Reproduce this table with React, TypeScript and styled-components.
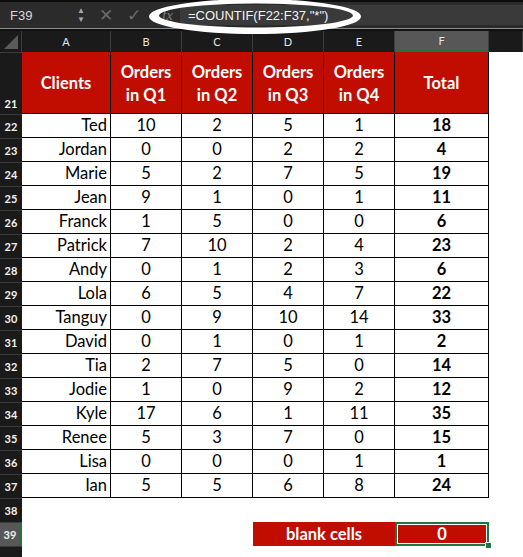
import React from "react";
import styled, { createGlobalStyle, css } from "styled-components";

const Global = createGlobalStyle`
  html, body { margin: 0; padding: 0; background: #ffffff; }
  body { width: 523px; height: 557px; overflow: hidden; font-family: Lato, "Open Sans", sans-serif; }
`;

const RED = "#c00d00";
const GREEN = "#217346";

const Page = styled.div`
  position: relative;
  width: 523px;
  height: 557px;
  overflow: hidden;
  display: flex;
  flex-direction: column;
  background: #fff;
`;

const FormulaBar = styled.div`
  height: 26px;
  border-top: 2px solid #0c0c0c;
  background: #2b2b2b;
  display: flex;
  align-items: center;
  font-family: "Liberation Sans", Arial, sans-serif;
`;

const BarDivider = styled.div`
  height: 2px;
  border-top: 1px solid #8c8c8c;
  background: #111;
`;

const NameBox = styled.div`
  width: 70px;
  padding-left: 10px;
  box-sizing: border-box;
  color: #d8d8d8;
  font-size: 13px;
`;

const Stepper = styled.div`
  width: 22px;
  display: flex;
  flex-direction: column;
  align-items: center;
  color: #a8a8a8;
  font-size: 8px;
  line-height: 9px;
`;

const BarIcon = styled.div<{ $w: number }>`
  width: ${(p) => p.$w}px;
  text-align: center;
  color: #6a6a6a;
  font-size: 17px;
`;

const Fx = styled.div`
  width: 32px;
  padding-left: 14px;
  box-sizing: border-box;
  color: #7a7a7a;
  font-family: "Liberation Serif", serif;
  font-style: italic;
  font-size: 15px;
`;

const FormulaField = styled.div`
  flex: 1;
  height: 20px;
  background: #3a3a3a;
  color: #f2f2f2;
  font-size: 13px;
  display: flex;
  align-items: center;
  padding-left: 8px;
`;

const Ring = styled.svg`
  position: absolute;
  left: 0;
  top: 0;
  pointer-events: none;
`;

const Sheet = styled.div`
  display: grid;
  grid-template-columns: 22px 89px 71px 71px 71px 71px 94px 1fr;
  grid-template-rows: 21px 62px repeat(18, 24px) 1fr;
  flex: 1;
`;

const ColHead = styled.div<{ $active?: boolean }>`
  background: ${(p) => (p.$active ? "#575757" : "#1a1a1a")};
  color: #e6e6e6;
  font-size: 11px;
  display: flex;
  align-items: center;
  justify-content: center;
  border-right: 1px solid #3c3c3c;
  box-sizing: border-box;
  ${(p) => p.$active && css`border-bottom: 2px solid ${GREEN};`}
`;

const Corner = styled.div`
  background: #1a1a1a;
  border-right: 1px solid #3c3c3c;
  position: relative;
  box-sizing: border-box;
`;

const CornerTri = styled.div`
  position: absolute;
  right: 3px;
  bottom: 3px;
  width: 0;
  height: 0;
  border-left: 14px solid transparent;
  border-bottom: 14px solid #5a5a5a;
`;

const RowHead = styled.div<{ $active?: boolean; $bottom?: boolean }>`
  background: ${(p) => (p.$active ? "#575757" : "#1a1a1a")};
  color: #f2f2f2;
  font-size: 11px;
  font-weight: 700;
  display: flex;
  justify-content: center;
  align-items: ${(p) => (p.$bottom ? "flex-end" : "center")};
  padding-bottom: ${(p) => (p.$bottom ? "4px" : "0")};
  border-top: 1px solid #3a3a3a;
  box-sizing: border-box;
  ${(p) => p.$active && css`border-right: 2px solid ${GREEN};`}
`;

type Kind = "head" | "data" | "blank" | "red";

const Cell = styled.div<{ $kind: Kind; $align?: "left" | "center" | "right"; $bold?: boolean }>`
  box-sizing: border-box;
  display: flex;
  align-items: center;
  justify-content: ${(p) => (p.$align === "right" ? "flex-end" : "center")};
  text-align: center;
  padding: ${(p) => (p.$align === "right" ? "0 3px 0 0" : "0")};
  font-size: 16.5px;
  line-height: 23px;
  font-weight: ${(p) => (p.$bold ? 700 : 400)};
  color: #000;
  background: #fff;
  ${(p) =>
    p.$kind === "head" &&
    css`
      background: ${RED};
      color: #fff;
      border-right: 1px solid #000;
      border-bottom: 1px solid #000;
      padding-top: 2px;
    `}
  ${(p) =>
    p.$kind === "data" &&
    css`
      border-right: 1px solid #000;
      border-bottom: 1px solid #000;
    `}
  ${(p) =>
    p.$kind === "red" &&
    css`
      background: ${RED};
      color: #fff;
    `}
`;

const Selected = styled(Cell)`
  position: relative;
  border: 2px solid ${GREEN};
  box-shadow: inset 0 0 0 1px #fff;
`;

const Handle = styled.div`
  position: absolute;
  right: -5px;
  bottom: -5px;
  width: 5px;
  height: 5px;
  background: ${GREEN};
  border: 1px solid #fff;
`;

const rows: [string, number, number, number, number, number][] = [
  ["Ted", 10, 2, 5, 1, 18],
  ["Jordan", 0, 0, 2, 2, 4],
  ["Marie", 5, 2, 7, 5, 19],
  ["Jean", 9, 1, 0, 1, 11],
  ["Franck", 1, 5, 0, 0, 6],
  ["Patrick", 7, 10, 2, 4, 23],
  ["Andy", 0, 1, 2, 3, 6],
  ["Lola", 6, 5, 4, 7, 22],
  ["Tanguy", 0, 9, 10, 14, 33],
  ["David", 0, 1, 0, 1, 2],
  ["Tia", 2, 7, 5, 0, 14],
  ["Jodie", 1, 0, 9, 2, 12],
  ["Kyle", 17, 6, 1, 11, 35],
  ["Renee", 5, 3, 7, 0, 15],
  ["Lisa", 0, 0, 0, 1, 1],
  ["Ian", 5, 5, 6, 8, 24],
];

const cols = ["A", "B", "C", "D", "E", "F"];

export default function App() {
  return (
    <Page>
      <Global />
      <FormulaBar>
        <NameBox>F39</NameBox>
        <Stepper>
          <span>▲</span>
          <span>▼</span>
        </Stepper>
        <BarIcon $w={28}>✕</BarIcon>
        <BarIcon $w={28}>✓</BarIcon>
        <Fx>fx</Fx>
        <FormulaField>=COUNTIF(F22:F37,"*")</FormulaField>
      </FormulaBar>
      <BarDivider />
      <Sheet>
        <Corner>
          <CornerTri />
        </Corner>
        {cols.map((c) => (
          <ColHead key={c} $active={c === "F"}>
            {c}
          </ColHead>
        ))}
        <ColHead />

        <RowHead $bottom>21</RowHead>
        <Cell $kind="head" $bold>Clients</Cell>
        {["Q1", "Q2", "Q3", "Q4"].map((q) => (
          <Cell key={q} $kind="head" $bold>
            Orders
            <br />
            in {q}
          </Cell>
        ))}
        <Cell $kind="head" $bold>Total</Cell>
        <Cell $kind="blank" />

        {rows.map((r, i) => (
          <React.Fragment key={r[0]}>
            <RowHead>{22 + i}</RowHead>
            <Cell $kind="data" $align="right">{r[0]}</Cell>
            <Cell $kind="data">{r[1]}</Cell>
            <Cell $kind="data">{r[2]}</Cell>
            <Cell $kind="data">{r[3]}</Cell>
            <Cell $kind="data">{r[4]}</Cell>
            <Cell $kind="data" $bold>{r[5]}</Cell>
            <Cell $kind="blank" />
          </React.Fragment>
        ))}

        <RowHead>38</RowHead>
        {[0, 1, 2, 3, 4, 5, 6].map((k) => (
          <Cell key={k} $kind="blank" />
        ))}

        <RowHead $active>39</RowHead>
        <Cell $kind="blank" />
        <Cell $kind="blank" />
        <Cell $kind="blank" />
        <Cell $kind="red" $bold style={{ gridColumn: "span 2" }}>
          blank cells
        </Cell>
        <Selected $kind="red" $bold>
          0
          <Handle />
        </Selected>
        <Cell $kind="blank" />

        <RowHead />
        {[0, 1, 2, 3, 4, 5, 6].map((k) => (
          <Cell key={k} $kind="blank" />
        ))}
      </Sheet>
      <Ring width={523} height={40} viewBox="0 0 523 40">
        <path
          fillRule="evenodd"
          fill="#ffffff"
          d="M149 16.5 A106 17.5 0 1 0 361 16.5 A106 17.5 0 1 0 149 16.5 Z M159 15.5 A97 12 0 1 0 353 15.5 A97 12 0 1 0 159 15.5 Z"
        />
      </Ring>
    </Page>
  );
}
